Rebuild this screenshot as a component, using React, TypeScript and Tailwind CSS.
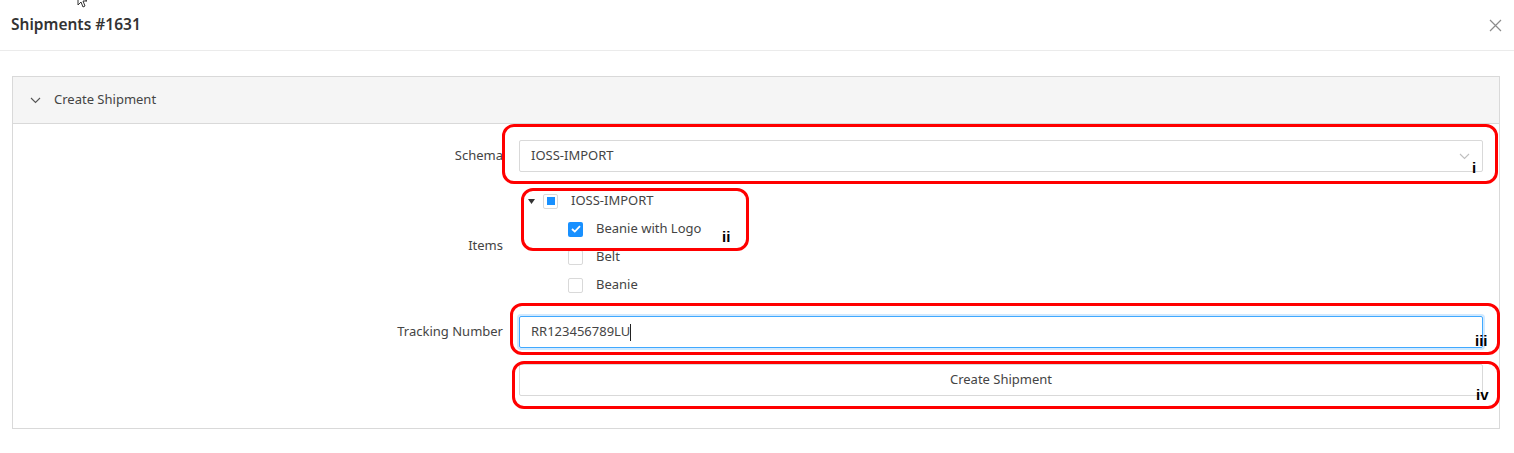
import React from "react";

const font = { fontFamily: '"Noto Sans", "Open Sans", sans-serif' };

function Check() {
  return (
    <svg width="10" height="8" viewBox="0 0 10 8" fill="none">
      <path d="M1 4l2.8 2.6L9 1.2" stroke="white" strokeWidth="1.8" />
    </svg>
  );
}

function TreeRow({ indent, children, box }: { indent: boolean; children: React.ReactNode; box: React.ReactNode }) {
  return (
    <div className={`flex items-center h-[28px] ${indent ? "pl-[49px]" : "pl-[9px]"}`}>
      {!indent && (
        <svg width="7" height="5" viewBox="0 0 7 5" className="mr-[8px]">
          <path d="M0 0h7L3.5 5z" fill="#333" />
        </svg>
      )}
      {box}
      <span className="ml-[13px] text-[13px] text-[#444]">{children}</span>
    </div>
  );
}

function EmptyBox() {
  return <span className="w-[15px] h-[15px] border border-[#d9d9d9] rounded-[2px] bg-white" />;
}

const ann = { fontFamily: '"Liberation Sans", Arial, sans-serif' };

export default function App() {
  return (
    <div className="relative w-[1514px] h-[453px] bg-white overflow-hidden" style={font}>
      {/* cursor */}
      <svg className="absolute left-[77px] top-[-6px]" width="12" height="14" viewBox="0 0 12 14">
        <path d="M1 1l0 10 3-3 2 5 2-1-2-5 4 0z" fill="white" stroke="#333" strokeWidth="1" />
      </svg>

      <div className="h-[51px] border-b border-[#ebebeb] flex items-center justify-between pl-[11px] pr-[12px]">
        <span className="text-[15.5px] font-semibold text-[#333]">Shipments #1631</span>
        <svg width="13" height="13" viewBox="0 0 13 13">
          <path d="M1 1l11 11M12 1L1 12" stroke="#8c8c8c" strokeWidth="1.2" />
        </svg>
      </div>

      <div className="pt-[25px] pl-[12px] pr-[14px]">
        <div className="border border-[#d9d9d9]">
          <div className="h-[47px] bg-[#f5f5f5] border-b border-[#d9d9d9] flex items-center pl-[17px]">
            <svg width="11" height="7" viewBox="0 0 11 7" fill="none">
              <path d="M1 1l4.5 4.5L10 1" stroke="#555" strokeWidth="1.1" />
            </svg>
            <span className="ml-[13px] text-[13px] text-[#444]">Create Shipment</span>
          </div>

          <div className="pt-[16px] pb-[32px] pr-[16px] flex flex-col">
            <div className="flex items-center">
              <div className="w-[490px] text-right text-[13px] text-[#444]">Schema</div>
              <div className="ml-[16px] flex-1 h-[32px] border border-[#d9d9d9] rounded-[2px] flex items-center justify-between pl-[11px] pr-[12px]">
                <span className="text-[13px] text-[#444]">IOSS-IMPORT</span>
                <svg width="11" height="7" viewBox="0 0 11 7" fill="none">
                  <path d="M1 1l4.5 4.5L10 1" stroke="#bfbfbf" strokeWidth="1.1" />
                </svg>
              </div>
            </div>

            <div className="flex items-center mt-[15px]">
              <div className="w-[490px] text-right text-[13px] text-[#444] pt-[6px]">Items</div>
              <div className="ml-[16px] flex-1 flex flex-col">
                <TreeRow
                  indent={false}
                  box={
                    <span className="w-[15px] h-[15px] border border-[#d9d9d9] rounded-[2px] bg-white flex items-center justify-center">
                      <span className="w-[8px] h-[8px] bg-[#1890ff]" />
                    </span>
                  }
                >
                  IOSS-IMPORT
                </TreeRow>
                <TreeRow
                  indent
                  box={
                    <span className="w-[15px] h-[15px] rounded-[2px] bg-[#1890ff] flex items-center justify-center">
                      <Check />
                    </span>
                  }
                >
                  Beanie with Logo
                </TreeRow>
                <TreeRow indent box={<EmptyBox />}>
                  Belt
                </TreeRow>
                <TreeRow indent box={<EmptyBox />}>
                  Beanie
                </TreeRow>
              </div>
            </div>

            <div className="flex items-center mt-[17px]">
              <div className="w-[490px] text-right text-[13px] text-[#444]">Tracking Number</div>
              <div className="ml-[16px] flex-1 h-[32px] border border-[#40a9ff] rounded-[2px] shadow-[0_0_0_2px_rgba(24,144,255,0.2)] flex items-center pl-[11px]">
                <span className="text-[13px] text-[#444]">RR123456789LU</span>
                <span className="w-[1px] h-[17px] bg-[#222]" />
              </div>
            </div>

            <div className="flex items-center mt-[16px]">
              <div className="w-[490px]" />
              <div className="ml-[16px] flex-1 h-[32px] border border-[#d9d9d9] rounded-[2px] flex items-center justify-center">
                <span className="text-[13px] text-[#444]">Create Shipment</span>
              </div>
            </div>
          </div>
        </div>
      </div>

      {/* annotations */}
      <div className="absolute left-[502px] top-[124px] w-[996px] h-[60px] border-[3px] border-[#ff0000] rounded-[12px]" />
      <div className="absolute left-[521px] top-[188px] w-[228px] h-[63px] border-[3px] border-[#ff0000] rounded-[12px]" />
      <div className="absolute left-[510px] top-[303px] w-[990px] h-[52px] border-[3px] border-[#ff0000] rounded-[12px]" />
      <div className="absolute left-[512px] top-[361px] w-[988px] h-[48px] border-[3px] border-[#ff0000] rounded-[12px]" />
      <span className="absolute left-[1472px] top-[160px] text-[15px] font-bold text-black leading-none" style={ann}>i</span>
      <span className="absolute left-[722px] top-[229px] text-[15px] font-bold text-black leading-none" style={ann}>ii</span>
      <span className="absolute left-[1475px] top-[333px] text-[15px] font-bold text-black leading-none" style={ann}>iii</span>
      <span className="absolute left-[1476px] top-[387px] text-[15px] font-bold text-black leading-none" style={ann}>iv</span>
    </div>
  );
}
